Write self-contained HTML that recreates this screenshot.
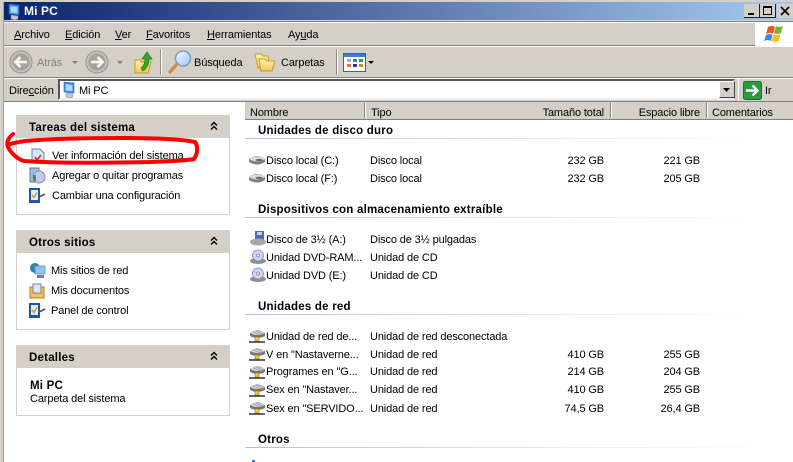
<!DOCTYPE html>
<html><head><meta charset="utf-8"><style>
html,body{margin:0;padding:0;background:#fff}
#w{position:relative;width:793px;height:462px;overflow:hidden;background:#fff;font:11px/13px "Liberation Sans",sans-serif;color:#000}
.a{position:absolute}
.t{position:absolute;white-space:nowrap;margin-top:1px;letter-spacing:-.13px}
.g .t{margin-top:2px}
.b{font-weight:bold;font-size:11.5px;letter-spacing:.22px}
.r{text-align:right;width:100px}
.h{position:absolute;left:245px;width:548px;height:1px;background:linear-gradient(90deg,#a9c4e8,#e4edf8 60%,#fff)}
.p{position:absolute;left:16px;width:212px;border:1px solid #d4d0c8;border-top:0;background:#fff}
.ph{position:absolute;left:16px;width:214px;height:23px;background:#d4d0c8}
svg{position:absolute;overflow:visible}
u{text-decoration:underline}
</style></head><body><div id="w">
<svg width="0" height="0" style="position:absolute"><defs>
<linearGradient id="lens" x1="0" y1="0" x2="1" y2="1"><stop offset="0" stop-color="#f4fbff"/><stop offset="1" stop-color="#9cc8f0"/></linearGradient>
<linearGradient id="fy" x1="0" y1="0" x2="0" y2="1"><stop offset="0" stop-color="#fff3b8"/><stop offset="1" stop-color="#f2c850"/></linearGradient>
<g id="hd"><path d="M0 6q8-6 16 0v3q-8 5-16 0z" fill="#808080"/><path d="M0 6q8-5 16 0q-8 5-16 0z" fill="#dcdcdc"/><ellipse cx="10" cy="7" rx="3.500" ry="1.300" fill="#6c6c6c"/></g>
<g id="net"><path d="M1 5q7-5 15 0v3q-8 4-15 0z" fill="#777"/><path d="M1 5q7-4 15 0q-8 4-15 0z" fill="#d8d8d8"/><path d="M4 4l8 3M7 3l7 3" stroke="#999" stroke-width=".7"/><rect x="6" y="9" width="4" height="4" fill="#f0c840" stroke="#a07010" stroke-width=".6"/><path d="M0 14H16" stroke="#303030" stroke-width="1.500"/></g>
<g id="cd"><ellipse cx="8" cy="12" rx="8" ry="3" fill="#909090"/><circle cx="8" cy="6.500" r="5.500" fill="#d0d4f4" stroke="#8088c0" stroke-width=".8"/><circle cx="8" cy="6.500" r="1.500" fill="#fff" stroke="#778" stroke-width=".7"/></g>
<g id="cp"><rect x="1" y="1" width="11" height="15" fill="#1f56a8"/><rect x="3" y="3" width="7" height="10" fill="#e4eef8"/><path d="M4 8l2 2.500 3-5" stroke="#c0a030" stroke-width="1.500" fill="none"/><path d="M11 10l6-3" stroke="#556" stroke-width="1.800"/></g>
<g id="chev"><path d="M0 3.500l3-3 3 3M0 7.500l3-3 3 3" fill="none" stroke="#000" stroke-width="1.400"/></g>
<g id="pc"><path d="M1 1l10 1v10l-10-1z" fill="#3f85e8" stroke="#2a5fb8" stroke-width=".6"/><path d="M2.500 3l7 1v6.500l-7-1z" fill="#a8d8fc"/><path d="M3 12l7 1v3l-3 1-4-1z" fill="#c4c4cc" stroke="#8a8a98" stroke-width=".5"/></g>
</defs></svg>

<!-- window frame -->
<div class="a" style="left:0;top:0;width:793px;height:2px;background:#d4d0c8"></div>
<div class="a" style="left:0;top:0;width:3px;height:462px;background:#d4d0c8"></div>
<div class="a" style="left:3px;top:2px;width:1px;height:460px;background:#a0a0a0"></div>
<div class="a" style="left:4px;top:2px;width:789px;height:18px;background:linear-gradient(90deg,#0a246a,#a6caf0)"></div>
<svg style="left:8px;top:3px" width="16" height="16"><use href="#pc"/></svg>
<div class="t" style="left:24px;top:4px;color:#fff;font-weight:bold;font-size:12px;letter-spacing:.1px">Mi PC</div>
<!-- window buttons -->
<div class="a" style="left:744px;top:4px;width:16px;height:14px;background:#d4d0c8;border-right:1px solid #202020;border-bottom:1px solid #202020;box-sizing:border-box"><div class="a" style="left:4px;top:9px;width:6px;height:2px;background:#000"></div></div>
<div class="a" style="left:760px;top:4px;width:16px;height:14px;background:#d4d0c8;border-right:1px solid #202020;border-bottom:1px solid #202020;box-sizing:border-box"><div class="a" style="left:3px;top:2px;width:9px;height:9px;box-sizing:border-box;border:1px solid #000;border-top-width:2px"></div></div>
<div class="a" style="left:777px;top:4px;width:16px;height:14px;background:#d4d0c8"></div>
<svg style="left:780px;top:6px" width="10" height="10"><path d="M1 1l8 8M9 1l-8 8" stroke="#000" stroke-width="1.600"/></svg>

<!-- bars -->
<div class="a" style="left:4px;top:20px;width:789px;height:82px;background:#d4d0c8"></div>
<div class="a" style="left:4px;top:21px;width:789px;height:1px;background:#808080"></div>
<div class="a" style="left:4px;top:22px;width:789px;height:1px;background:#fff"></div>
<div class="a" style="left:4px;top:45px;width:751px;height:1px;background:#808080"></div>
<div class="a" style="left:4px;top:46px;width:789px;height:1px;background:#fff"></div>
<div class="a" style="left:4px;top:77px;width:789px;height:1px;background:#808080"></div>
<div class="a" style="left:4px;top:78px;width:789px;height:1px;background:#fff"></div>
<div class="a" style="left:4px;top:101px;width:789px;height:1px;background:#808080"></div>
<!-- logo box -->
<div class="a" style="left:755px;top:22px;width:38px;height:24px;background:#fff"></div>
<svg style="left:765px;top:25px" width="20" height="18"><path d="M3 2q4-2 7 0l-2 7q-3-2-7 0z" fill="#e8572a"/><path d="M11 1q3 2 7 0l-2 7q-4 2-7 0z" fill="#7ab030"/><path d="M1 10q4-2 6.500 0l-1.500 6q-3-2-7 0z" fill="#3c8ae0"/><path d="M8.500 9q3 2 7 0l-2 7q-4 2-7 0z" fill="#f5c020"/></svg>

<!-- menu -->
<div class="t" style="left:14px;top:28px"><u>A</u>rchivo</div>
<div class="t" style="left:65px;top:28px"><u>E</u>dición</div>
<div class="t" style="left:115px;top:28px"><u>V</u>er</div>
<div class="t" style="left:146px;top:28px"><u>F</u>avoritos</div>
<div class="t" style="left:207px;top:28px"><u>H</u>erramientas</div>
<div class="t" style="left:288px;top:28px">Ay<u>u</u>da</div>

<!-- toolbar -->
<svg style="left:10px;top:51px" width="23" height="23"><circle cx="11" cy="11" r="11" fill="#c4c1ba" stroke="#97948d"/><circle cx="11" cy="11" r="8.500" fill="#a5a29b"/><path d="M17 11H6M10.500 6l-5 5 5 5" fill="none" stroke="#f4f3f0" stroke-width="2.800"/></svg>
<div class="t" style="left:37px;top:56px;color:#808080">Atrás</div>
<svg style="left:72px;top:61px" width="7" height="4"><path d="M0 0h6l-3 3z" fill="#808080"/></svg>
<svg style="left:86px;top:51px" width="23" height="23"><circle cx="11" cy="11" r="11" fill="#c4c1ba" stroke="#97948d"/><circle cx="11" cy="11" r="8.500" fill="#a5a29b"/><path d="M5 11h11M11.500 6l5 5-5 5" fill="none" stroke="#f4f3f0" stroke-width="2.800"/></svg>
<svg style="left:117px;top:61px" width="7" height="4"><path d="M0 0h6l-3 3z" fill="#808080"/></svg>
<svg style="left:134px;top:50px" width="20" height="24"><path d="M1 10h5l1 2h10l-3 11H1z" fill="url(#fy)" stroke="#c49a20"/><path d="M7 18q4-3 4-9H8l5-7 5 7h-3q0 8-6 12z" fill="#38a828" stroke="#1f7a18" stroke-width=".7"/></svg>
<div class="a" style="left:160px;top:49px;width:1px;height:26px;background:#908d86"></div>
<div class="a" style="left:161px;top:49px;width:1px;height:26px;background:#fff"></div>
<svg style="left:167px;top:50px" width="24" height="24"><path d="M2 23l8-9" stroke="#d8863a" stroke-width="3.200"/><circle cx="16" cy="8.500" r="7.500" fill="url(#lens)" stroke="#7a9cc8" stroke-width="1.500"/></svg>
<div class="t" style="left:194px;top:56px">Búsqueda</div>
<svg style="left:254px;top:52px" width="22" height="20"><path d="M1 2h6l2 2h5l2 12H4z" fill="url(#fy)" stroke="#c49a20"/><path d="M5 7h6l2 2h7l1 0-3 10H7z" fill="url(#fy)" stroke="#c49a20"/></svg>
<div class="t" style="left:281px;top:56px">Carpetas</div>
<div class="a" style="left:336px;top:49px;width:1px;height:26px;background:#908d86"></div>
<div class="a" style="left:337px;top:49px;width:1px;height:26px;background:#fff"></div>
<svg style="left:343px;top:53px" width="23" height="19"><rect x=".5" y=".5" width="22" height="18" fill="#fff" stroke="#2a64b8"/><rect x="1" y="1" width="21" height="3" fill="#3a7ad0"/><g><rect x="4" y="6" width="4" height="3" fill="#a8a8d0"/><rect x="10" y="6" width="4" height="3" fill="#3a7ad0"/><rect x="16" y="6" width="4" height="3" fill="#30a040"/><rect x="4" y="11" width="4" height="3" fill="#e87040"/><rect x="10" y="11" width="4" height="3" fill="#203890"/><rect x="16" y="11" width="4" height="3" fill="#c89020"/></g></svg>
<svg style="left:368px;top:61px" width="7" height="4"><path d="M0 0h6l-3 3z" fill="#000"/></svg>

<!-- address -->
<div class="t" style="left:9px;top:84px">Dire<u>c</u>ción</div>
<div class="a" style="left:58px;top:79px;width:677px;height:21px;box-sizing:border-box;background:#fff;border:2px solid;border-color:#555 #d4d0c8 #eee #555"></div>
<svg style="left:63px;top:81px" width="16" height="16"><use href="#pc"/></svg>
<div class="t" style="left:79px;top:84px">Mi PC</div>
<div class="a" style="left:719px;top:81px;width:16px;height:17px;box-sizing:border-box;background:#d4d0c8;border:1px solid;border-color:#fff #404040 #404040 #fff"></div>
<svg style="left:723px;top:88px" width="8" height="5"><path d="M0 0h7l-3.500 4z" fill="#000"/></svg>
<svg style="left:743px;top:81px" width="19" height="19"><rect x=".5" y=".5" width="18" height="18" rx="2" fill="#2c9a3c" stroke="#1a7028"/><path d="M3 9.500h11M9.500 4.500l5 5-5 5" fill="none" stroke="#fff" stroke-width="2.400"/></svg>
<div class="t" style="left:765px;top:84px">Ir</div>
<div class="a" style="left:738px;top:79px;width:1px;height:22px;background:#fff"></div>

<!-- left panels -->
<div class="ph" style="top:115px"></div>
<div class="p" style="top:138px;height:76px"></div>
<div class="t b" style="left:29px;top:121px">Tareas del sistema</div>
<svg style="left:211px;top:122px" width="8" height="9"><use href="#chev"/></svg>
<svg style="left:31px;top:148px" width="14" height="16"><path d="M1 1h8l4 4v10H1z" fill="#d8e6f8" stroke="#5a80b8"/><path d="M4 9l2 3 4-5" stroke="#e03020" stroke-width="1.800" fill="none"/></svg>
<div class="t" style="left:52px;top:149px">Ver información del sistema</div>
<svg style="left:29px;top:167px" width="17" height="17"><rect x="1" y="1" width="9" height="14" fill="#9fc0d8" stroke="#607890"/><circle cx="10" cy="10" r="6" fill="#c8c8ec" stroke="#8888b8"/><rect x="4" y="8" width="3" height="6" fill="#30a040"/></svg>
<div class="t" style="left:52px;top:169px">Agregar o quitar programas</div>
<svg style="left:28px;top:187px" width="18" height="17"><use href="#cp"/></svg>
<div class="t" style="left:52px;top:189px">Cambiar una configuración</div>

<div class="ph" style="top:230px"></div>
<div class="p" style="top:253px;height:76px"></div>
<div class="t b" style="left:29px;top:236px">Otros sitios</div>
<svg style="left:211px;top:237px" width="8" height="9"><use href="#chev"/></svg>
<svg style="left:29px;top:263px" width="17" height="16"><circle cx="6" cy="5" r="5" fill="#2a80c0"/><path d="M3 2l3 1-1 4z" fill="#40a040"/><rect x="6" y="3" width="10" height="8" fill="#8cc4f4" stroke="#5a80b8" stroke-width=".7"/><rect x="8" y="12" width="7" height="3" fill="#7878a0"/></svg>
<div class="t" style="left:51px;top:264px">Mis sitios de red</div>
<svg style="left:29px;top:283px" width="16" height="16"><rect x="1" y="4" width="14" height="11" fill="#f0c060" stroke="#b08020"/><rect x="4" y="1" width="8" height="9" fill="#dce8f4" stroke="#7088a8"/></svg>
<div class="t" style="left:51px;top:284px">Mis documentos</div>
<svg style="left:28px;top:302px" width="18" height="17"><use href="#cp"/></svg>
<div class="t" style="left:51px;top:304px">Panel de control</div>

<div class="ph" style="top:345px"></div>
<div class="p" style="top:368px;height:47px"></div>
<div class="t b" style="left:29px;top:351px">Detalles</div>
<svg style="left:211px;top:352px" width="8" height="9"><use href="#chev"/></svg>
<div class="t b" style="left:30px;top:379px">Mi PC</div>
<div class="t" style="left:30px;top:392px">Carpeta del sistema</div>

<div class="g">
<!-- content divider / column header -->
<div class="a" style="left:245px;top:102px;width:548px;height:18px;background:#d4d0c8"></div>
<div class="a" style="left:245px;top:119px;width:548px;height:1px;background:#808080"></div>
<div class="a" style="left:364px;top:103px;width:1px;height:15px;background:#808080"></div>
<div class="a" style="left:365px;top:103px;width:1px;height:15px;background:#fff"></div>
<div class="a" style="left:610px;top:103px;width:1px;height:15px;background:#808080"></div>
<div class="a" style="left:611px;top:103px;width:1px;height:15px;background:#fff"></div>
<div class="a" style="left:706px;top:103px;width:1px;height:15px;background:#808080"></div>
<div class="a" style="left:707px;top:103px;width:1px;height:15px;background:#fff"></div>
<div class="t" style="left:250px;top:105px">Nombre</div>
<div class="t" style="left:371px;top:105px">Tipo</div>
<div class="t r" style="left:504px;top:105px">Tamaño total</div>
<div class="t r" style="left:600px;top:105px">Espacio libre</div>
<div class="t" style="left:712px;top:105px">Comentarios</div>

<!-- groups -->
<div class="t b" style="left:258px;top:123px">Unidades de disco duro</div><div class="h" style="top:138px"></div>
<svg style="left:249px;top:153px" width="17" height="14"><use href="#hd"/></svg>
<div class="t" style="left:266px;top:153px">Disco local (C:)</div><div class="t" style="left:370px;top:153px">Disco local</div>
<div class="t r" style="left:504px;top:153px">232 GB</div><div class="t r" style="left:600px;top:153px">221 GB</div>
<svg style="left:249px;top:171px" width="17" height="14"><use href="#hd"/></svg>
<div class="t" style="left:266px;top:171px">Disco local (F:)</div><div class="t" style="left:370px;top:171px">Disco local</div>
<div class="t r" style="left:504px;top:171px">232 GB</div><div class="t r" style="left:600px;top:171px">205 GB</div>

<div class="t b" style="left:258px;top:202px">Dispositivos con almacenamiento extraíble</div><div class="h" style="top:217px"></div>
<svg style="left:250px;top:231px" width="17" height="16"><rect x="5" y="0" width="9" height="9" fill="#5068b0"/><rect x="7" y="1" width="5" height="3" fill="#c8d0f0"/><ellipse cx="8" cy="11" rx="8" ry="3.500" fill="#a8a8a8"/></svg>
<div class="t" style="left:266px;top:232px">Disco de 3½ (A:)</div><div class="t" style="left:370px;top:232px">Disco de 3½ pulgadas</div>
<svg style="left:250px;top:249px" width="17" height="16"><use href="#cd"/></svg>
<div class="t" style="left:266px;top:250px">Unidad DVD-RAM...</div><div class="t" style="left:370px;top:250px">Unidad de CD</div>
<svg style="left:250px;top:267px" width="17" height="16"><use href="#cd"/></svg>
<div class="t" style="left:266px;top:268px">Unidad DVD (E:)</div><div class="t" style="left:370px;top:268px">Unidad de CD</div>

<div class="t b" style="left:258px;top:299px">Unidades de red</div><div class="h" style="top:314px"></div>
<svg style="left:249px;top:328px" width="17" height="16"><use href="#net"/></svg>
<div class="t" style="left:266px;top:329px">Unidad de red de...</div><div class="t" style="left:370px;top:329px">Unidad de red desconectada</div>
<svg style="left:249px;top:346px" width="17" height="16"><use href="#net"/></svg>
<div class="t" style="left:266px;top:347px">V en "Nastaverne...</div><div class="t" style="left:370px;top:347px">Unidad de red</div>
<div class="t r" style="left:504px;top:347px">410 GB</div><div class="t r" style="left:600px;top:347px">255 GB</div>
<svg style="left:249px;top:364px" width="17" height="16"><use href="#net"/></svg>
<div class="t" style="left:266px;top:364px">Programes en "G...</div><div class="t" style="left:370px;top:364px">Unidad de red</div>
<div class="t r" style="left:504px;top:364px">214 GB</div><div class="t r" style="left:600px;top:364px">204 GB</div>
<svg style="left:249px;top:382px" width="17" height="16"><use href="#net"/></svg>
<div class="t" style="left:266px;top:382px">Sex en "Nastaver...</div><div class="t" style="left:370px;top:382px">Unidad de red</div>
<div class="t r" style="left:504px;top:382px">410 GB</div><div class="t r" style="left:600px;top:382px">255 GB</div>
<svg style="left:249px;top:400px" width="17" height="16"><use href="#net"/></svg>
<div class="t" style="left:266px;top:401px">Sex en "SERVIDO...</div><div class="t" style="left:370px;top:401px">Unidad de red</div>
<div class="t r" style="left:504px;top:401px">74,5 GB</div><div class="t r" style="left:600px;top:401px">26,4 GB</div>

<div class="t b" style="left:258px;top:432px">Otros</div><div class="h" style="top:447px"></div>
<div class="a" style="left:252px;top:460px;width:3px;height:2px;background:#3a78c8"></div>
</div>

<!-- red scribble -->
<svg style="left:0;top:0" width="793" height="462"><path d="M13 134C8 138 6 143 8 147C11 153 17 159 24 161C50 163 100 163 150 162C170 161 185 161 194 159C198 153 198 146 195 142C180 139 150 138 120 138C90 138 50 139 25 141C18 142 12 143 8 145" fill="none" stroke="#f00" stroke-width="4" stroke-linecap="round"/></svg>
</div></body></html>
